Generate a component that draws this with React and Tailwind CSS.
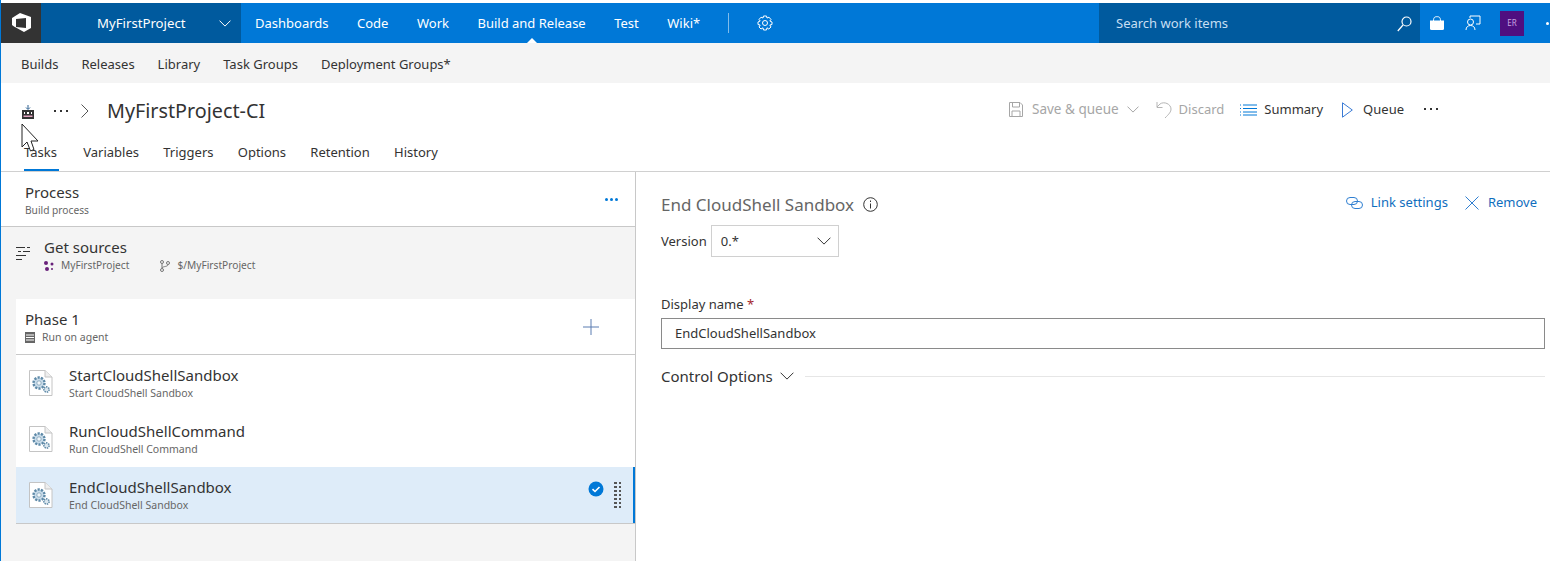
import React from 'react';

function Chevron({ w = 12, className = '' }) {
  return (
    <svg width={w} height={w * 0.6} viewBox="0 0 12 7" fill="none" stroke="currentColor" strokeWidth={w > 12 ? 0.85 : 1} className={className}>
      <path d="M0.5 0.5L6 6L11.5 0.5" />
    </svg>
  );
}

function Dots({ className = '' }) {
  return (
    <div className={`flex gap-[4px] ${className}`}>
      <span className="w-[2px] h-[2px] bg-[#333]" />
      <span className="w-[2px] h-[2px] bg-[#333]" />
      <span className="w-[2px] h-[2px] bg-[#333]" />
    </div>
  );
}

function TaskIcon() {
  return (
    <svg width="26" height="28" viewBox="0 0 26 28" className="shrink-0">
      <path d="M1.5 1.5H17L24 8V26.5H1.5Z" fill="#fff" stroke="#c4c4c4" />
      <path d="M17 1.5V8H24" fill="#eee" stroke="#c4c4c4" />
      <circle cx="11" cy="14" r="5.5" fill="#c9dcea" />
      <circle cx="11" cy="14" r="5.5" fill="none" stroke="#5f8aa8" strokeWidth="2.4" strokeDasharray="2.2 1.2" />
      <circle cx="11" cy="14" r="2.2" fill="#f2f7fa" stroke="#7fa0b6" strokeWidth="0.8" />
      <circle cx="18.5" cy="20.5" r="2.6" fill="#dbe7ef" stroke="#5f8aa8" strokeWidth="1.6" strokeDasharray="1.4 0.9" />
    </svg>
  );
}

function TaskRow({ name, desc, selected }) {
  return (
    <div className={`h-[56px] flex items-center pl-[12px] relative ${selected ? 'bg-[#deecf9] border-r-2 border-[#0078d7]' : 'bg-white'}`}>
      <TaskIcon />
      <div className="ml-[15px] -mt-[1px]">
        <div className="text-[15px] leading-[20px] text-[#333]">{name}</div>
        <div className="text-[10.5px] leading-[15px] text-[#666] mt-[1px]">{desc}</div>
      </div>
      {selected && (
        <div className="ml-auto flex items-center mr-[12px]">
          <svg width="16" height="16" viewBox="0 0 16 16" className="mr-[10px] -mt-[12px]">
            <circle cx="8" cy="8" r="7.5" fill="#0078d7" />
            <path d="M4.5 8.2L7 10.5L11.5 6" fill="none" stroke="#fff" strokeWidth="1.6" />
          </svg>
          <div className="grid grid-cols-2 gap-x-[2px] gap-y-[1.5px]">
            {[...Array(14)].map((_, i) => (
              <span key={i} className="w-[2.5px] h-[2.5px] bg-[#555]" />
            ))}
          </div>
        </div>
      )}
    </div>
  );
}

export default function App() {
  return (
    <div className="relative w-[1550px] h-[561px] overflow-hidden bg-white font-['Noto_Sans',sans-serif] text-[13px] text-[#333] border-l border-[#0078d7] pt-[3px]">
      {/* top bar */}
      <header className="h-[40px] flex items-center bg-[#0078d7] text-white text-[13px]">
        <div className="w-[40px] h-full bg-[#333] grid place-items-center">
          <svg width="20" height="20" viewBox="0 0 20 20">
            <path fillRule="evenodd" d="M1 5L9 0L20 4V15L13 19L3 13.5L1 12ZM5 6V14L15 15V5Z" fill="#fff" />
          </svg>
        </div>
        <div className="w-[200px] h-full bg-[#005a9e] flex items-center pl-[56px] pt-[2px]">
          <span className="text-[13.2px]">MyFirstProject</span>
          <Chevron className="ml-auto mr-[10px]" />
        </div>
        <nav className="flex items-center h-full pl-[14px] gap-[28.5px] pt-[2px]">
          <span>Dashboards</span>
          <span>Code</span>
          <span>Work</span>
          <span className="relative h-full flex items-center">
            Build and Release
            <span className="absolute bottom-0 left-1/2 -ml-[5px] border-x-[5px] border-b-[5px] border-x-transparent border-b-white" />
          </span>
          <span>Test</span>
          <span>Wiki*</span>
        </nav>
        <div className="w-px h-[20px] bg-white/50 ml-[28px]" />
        <svg width="16" height="16" viewBox="0 0 16 16" fill="none" stroke="#fff" className="ml-[28px]">
          <circle cx="8" cy="8" r="2.5" />
          <path d="M6.5 1H9.5L10 3L12 2.2L14 4.5L12.8 6L15 7V9.5L12.8 10L14 12L11.8 14L10 12.8L9.5 15H6.5L6 12.8L4 14L2 12L3.2 10L1 9.5V7L3.2 6L2 4.5L4 2.2L6 3Z" />
        </svg>
        <div className="ml-auto w-[321px] h-full bg-[#005a9e] flex items-center pl-[17px] pr-[8px] text-[#c7dff3] pt-[2px]">
          <span>Search work items</span>
          <svg width="15" height="16" viewBox="0 0 15 16" fill="none" stroke="#fff" strokeWidth="1.2" className="ml-auto">
            <circle cx="9.5" cy="5.5" r="4.5" />
            <path d="M6 9L0.8 15" />
          </svg>
        </div>
        <div className="w-[130px] flex items-center pl-[10px] shrink-0">
          <svg width="14" height="14" viewBox="0 0 14 14">
            <path d="M0 4.5H14V12.5Q14 14 12.5 14H1.5Q0 14 0 12.5Z" fill="#fff" />
            <path d="M3.5 5C3.5 1 5 .7 7 .7S10.5 1 10.5 5" fill="none" stroke="#fff" />
          </svg>
          <svg width="16" height="16" viewBox="0 0 16 16" fill="none" stroke="#fff" className="ml-[21px]">
            <path d="M5 3V1H15V9H11" />
            <circle cx="5.5" cy="7" r="3" />
            <path d="M1 15C1 12 3 10.5 5.5 10.5C8 10.5 10 12 10 15" />
          </svg>
          <div className="ml-[19px] w-[24px] h-[25px] bg-[#4f0f80] grid place-items-center text-[8px] text-[#c9a7e0]">ER</div>
          <div className="ml-[22px] w-[3px] h-[3px] rounded-full bg-white" />
        </div>
      </header>

      {/* sub nav */}
      <div className="h-[40px] bg-[#f4f4f4] flex items-center pl-[20px] gap-[23px] pt-[3px]">
        <span>Builds</span>
        <span>Releases</span>
        <span>Library</span>
        <span>Task Groups</span>
        <span>Deployment Groups*</span>
      </div>

      {/* title row */}
      <div className="h-[49px] flex items-start pl-[20px] pt-[14px]">
        <div className="flex items-center h-[27px]">
          <svg width="14" height="14" viewBox="0 0 14 14" className="mt-[3px]">
            <path d="M7 0V4M5 2.5L7 4.5L9 2.5" fill="none" stroke="#2b5f8f" />
            <path d="M1 5H13V14H1Z" fill="#333" />
            <path d="M3 7H4V9H3ZM6 7H8V9H6ZM10 7H11V9H10Z" fill="#fff" />
            <path d="M2.5 10.5H11.5V12H2.5Z" fill="#e3a3c0" />
          </svg>
          <Dots className="ml-[19px]" />
          <svg width="8" height="14" viewBox="0 0 8 14" fill="none" stroke="#555" className="ml-[13px]">
            <path d="M0.5 0.5L7 7L0.5 13.5" />
          </svg>
          <h1 className="ml-[18px] text-[19.75px] leading-[27px] text-[#333]">MyFirstProject-CI</h1>
        </div>
        <div className="ml-auto flex items-center h-[27px] mr-[112px] -mt-[1px]">
          <svg width="14" height="15" viewBox="0 0 14 15" fill="none" stroke="#a6a6a6">
            <path d="M0.5 0.5H11L13.5 3V14.5H0.5ZM3.5 0.5V5H10.5V0.5M3 14.5V9H11V14.5" />
          </svg>
          <span className="ml-[9px] text-[13.5px] text-[#a6a6a6]">Save &amp; queue</span>
          <Chevron className="ml-[8px] text-[#a6a6a6]" />
          <svg width="16" height="18" viewBox="0 0 16 18" fill="none" stroke="#b5b5b5" className="ml-[17px]">
            <path d="M1 1V6.5H6.5M1 6L4 3C8 0 15 3 15 8C15 11 13 13 9 17" />
          </svg>
          <span className="ml-[7px] text-[#a6a6a6]">Discard</span>
          <svg width="17" height="12" viewBox="0 0 17 12" stroke="#0078d7" className="ml-[16px]">
            <path d="M3 1H17M3 4.5H17M3 8H17M3 11H17" />
            <path d="M0 1H2M0 4.5H2M0 8H2M0 11H2" strokeDasharray="1 1" />
          </svg>
          <span className="ml-[7px]">Summary</span>
          <svg width="11" height="16" viewBox="0 0 11 16" fill="none" stroke="#3a7bd5" className="ml-[19px]">
            <path d="M0.5 0.8L10.3 8L0.5 15.2Z" />
          </svg>
          <span className="ml-[10px]">Queue</span>
          <Dots className="ml-[20px] -mt-[2px]" />
        </div>
      </div>

      {/* tabs */}
      <div className="h-[40px] flex pl-[23px] gap-[24.25px] border-b border-[#d0d0d0]">
        <span className="relative pt-[11px] w-[35px]">
          Tasks
          <span className="absolute left-0 right-0 bottom-0 h-[2px] bg-[#0078d7]" />
        </span>
        <span className="pt-[11px]">Variables</span>
        <span className="pt-[11px]">Triggers</span>
        <span className="pt-[11px]">Options</span>
        <span className="pt-[11px]">Retention</span>
        <span className="pt-[11px]">History</span>
      </div>

      <div className="flex h-[389px]">
        {/* left pane */}
        <aside className="w-[635px] shrink-0 bg-[#f4f4f4] border-r border-[#c8c8c8]">
          <div className="h-[55px] bg-white border-b border-[#c8c8c8] flex items-center pl-[24px] pr-[17px]">
            <div className="pt-[2px]">
              <div className="text-[15px] leading-[20px]">Process</div>
              <div className="text-[10.2px] leading-[15px] text-[#666] mt-[1px]">Build process</div>
            </div>
            <div className="ml-auto flex gap-[2px]">
              <span className="w-[3px] h-[3px] rounded-full bg-[#0078d7]" />
              <span className="w-[3px] h-[3px] rounded-full bg-[#0078d7]" />
              <span className="w-[3px] h-[3px] rounded-full bg-[#0078d7]" />
            </div>
          </div>

          <div className="h-[72px] flex pl-[14px] pt-[10px]">
            <svg width="16" height="14" viewBox="0 0 16 14" className="mt-[9px]" stroke="#333" fill="none">
              <path d="M1 1.5H10M12 1.5H15M3 5.5H6M8 5.5H15M1 9.5H11M1 13.5H7" />
            </svg>
            <div className="ml-[13px]">
              <div className="text-[15px] leading-[20px]">Get sources</div>
              <div className="flex items-center text-[10.2px] leading-[15px] text-[#666] mt-[1px]">
                <svg width="10" height="10" viewBox="0 0 10 10" fill="#68217a">
                  <circle cx="2" cy="2" r="2" /><circle cx="8" cy="3" r="1.5" /><circle cx="3" cy="8" r="2" /><circle cx="8" cy="8" r="1" />
                </svg>
                <span className="ml-[7px]">MyFirstProject</span>
                <svg width="10" height="12" viewBox="0 0 10 12" fill="none" stroke="#777" className="ml-[31px]">
                  <circle cx="2" cy="2" r="1.5" /><circle cx="2" cy="10" r="1.5" /><circle cx="8" cy="3" r="1.5" /><path d="M2 3.5V8.5M8 4.5C8 7 3 6 2 8" />
                </svg>
                <span className="ml-[7px]">$/MyFirstProject</span>
              </div>
            </div>
          </div>

          <div className="ml-[15px]">
            <div className="h-[56px] bg-white border-b border-[#c8c8c8] flex items-center pl-[9px] pr-[36px]">
              <div className="pt-[2px]">
                <div className="text-[15px] leading-[19px]">Phase 1</div>
                <div className="flex items-center text-[10.5px] leading-[15px] text-[#666] mt-[1px]">
                  <svg width="10" height="11" viewBox="0 0 10 11" className="mr-[7px]">
                    <path d="M0 0H10V11H0Z" fill="#666" />
                    <path d="M1 3H9M1 5.5H9M1 8H9" stroke="#fff" />
                  </svg>
                  Run on agent
                </div>
              </div>
              <svg width="16" height="16" viewBox="0 0 16 16" stroke="#5b7db1" className="ml-auto">
                <path d="M8 0V16M0 8H16" />
              </svg>
            </div>
            <TaskRow name="StartCloudShellSandbox" desc="Start CloudShell Sandbox" />
            <TaskRow name="RunCloudShellCommand" desc="Run CloudShell Command" />
            <div className="border-b border-[#c8c8c8]">
              <TaskRow name="EndCloudShellSandbox" desc="End CloudShell Sandbox" selected />
            </div>
          </div>
        </aside>

        {/* right pane */}
        <main className="flex-1 pl-[25px] pr-[5px]">
          <div className="flex items-start h-[53px] pt-[21px]">
            <h2 className="text-[17px] leading-[23px] text-[#666]">End CloudShell Sandbox</h2>
            <svg width="15" height="15" viewBox="0 0 15 15" fill="none" stroke="#333" className="ml-[9px] mt-[4px]">
              <circle cx="7.5" cy="7.5" r="6.8" />
              <path d="M7.5 6.5V11.5M7.5 3.5V5" />
            </svg>
            <div className="ml-auto flex items-center text-[#106ebe] mr-[8px] h-[18px] mt-[1px]">
              <svg width="17" height="12" viewBox="0 0 17 12" fill="none" stroke="#2f7fd1">
                <rect x="0.5" y="0.5" width="11" height="7" rx="3.5" />
                <rect x="5.5" y="4.5" width="11" height="7" rx="3.5" />
              </svg>
              <span className="ml-[8px]">Link settings</span>
              <svg width="14" height="14" viewBox="0 0 14 14" stroke="#2f7fd1" className="ml-[17px]">
                <path d="M0.5 0.5L13.5 13.5M13.5 0.5L0.5 13.5" />
              </svg>
              <span className="ml-[9px]">Remove</span>
            </div>
          </div>
          <div className="flex items-center">
            <span className="pt-[2px]">Version</span>
            <div className="ml-[4px] w-[128px] h-[32px] border border-[#d0d0d0] flex items-center pl-[9px] pr-[7px]">
              <span className="pt-[2px]">0.*</span>
              <Chevron w={14} className="ml-auto" />
            </div>
          </div>
          <div className="mt-[37px] leading-[20px]">
            Display name <span className="text-[#a4262c]">*</span>
          </div>
          <div className="mt-[4px] h-[31px] border border-[#8a8a8a] flex items-center pl-[13px] pt-[1px]">EndCloudShellSandbox</div>
          <div className="mt-[17px] flex items-center h-[20px]">
            <span className="text-[15px]">Control Options</span>
            <Chevron w={14} className="ml-[7px]" />
            <div className="flex-1 h-px bg-[#e6e6e6] ml-[11px]" />
          </div>
        </main>
      </div>

      {/* mouse cursor */}
      <svg width="18" height="30" viewBox="0 0 18 30" className="absolute left-[20px] top-[123px]">
        <path d="M1 1V24L6 19L9.5 28L13 26.5L10 18H17Z" fill="#fff" stroke="#222" />
      </svg>
    </div>
  );
}
